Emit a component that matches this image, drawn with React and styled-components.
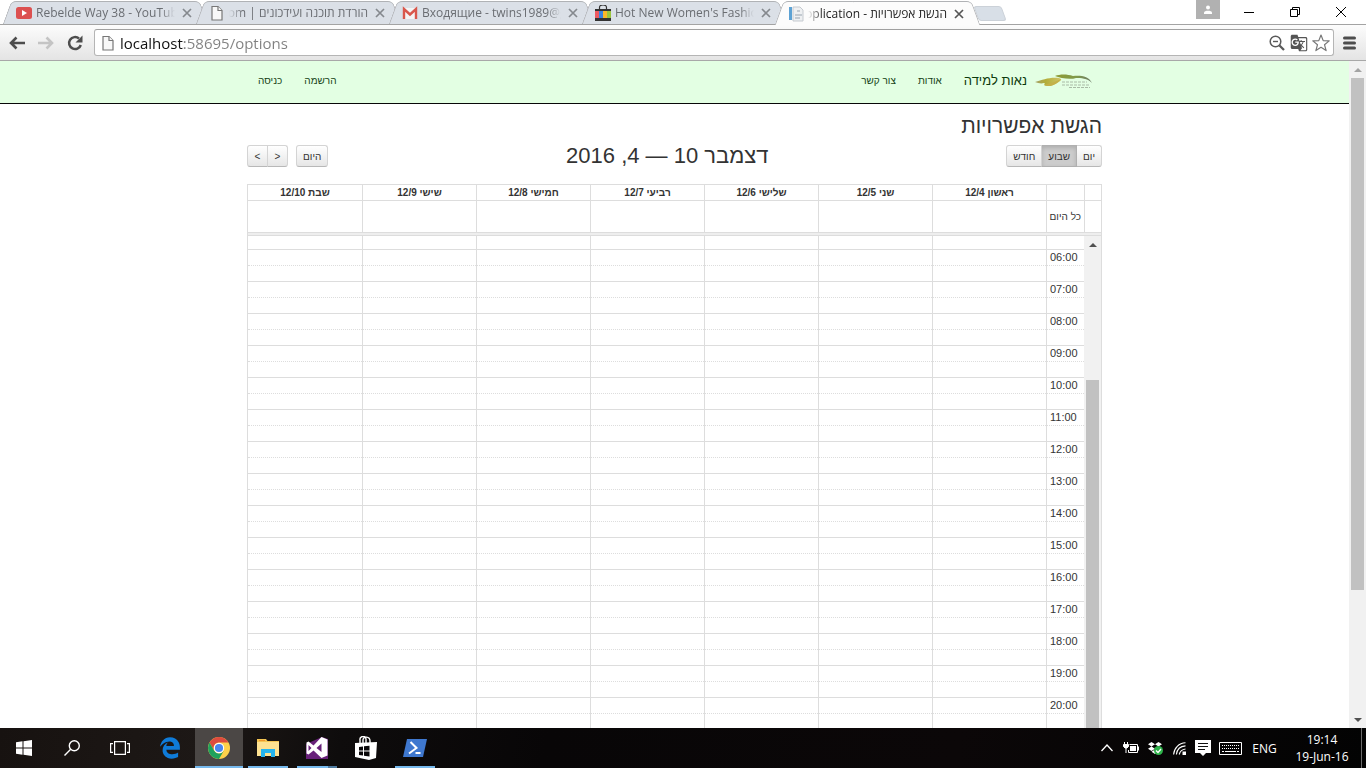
import React from "react";
import styled, { createGlobalStyle, css } from "styled-components";
import { MdGTranslate } from "react-icons/md";
import { FaEdgeLegacy, FaDropbox } from "react-icons/fa6";

const UI_FONT = '"Open Sans", "Liberation Sans", sans-serif';
const PAGE_FONT = '"Liberation Sans", Arial, sans-serif';
const LINE = "#dddddd";

const GlobalStyle = createGlobalStyle`
  *, *::before, *::after { box-sizing: border-box; }
  body { margin: 0; background: #fff; font-family: ${PAGE_FONT}; }
  button, input { font: inherit; color: inherit; margin: 0; padding: 0; border: 0; background: none; }
  button { display: flex; align-items: center; justify-content: center; }
  svg { display: block; flex: none; }
`;

const Screen = styled.div`
  display: flex;
  flex-direction: column;
  height: 100vh;
  overflow: hidden;
`;

/* ---------- browser tabs ---------- */

const TabStrip = styled.div`
  display: flex;
  flex: none;
  height: 25px;
  padding-left: 3px;
  border-bottom: 1px solid #a3a3a3;
  font-family: ${UI_FONT};
  font-size: 12px;
`;

const Tab = styled.div`
  position: relative;
  isolation: isolate;
  z-index: ${(p) => (p.$active ? 1 : 0)};
  display: flex;
  align-items: center;
  gap: 4px;
  flex: 0 1 205px;
  min-width: 0;
  height: ${(p) => (p.$active ? 25 : 24)}px;
  padding: 2px 13px 0 13px;
  color: ${(p) => (p.$active ? "#222" : "#6a6d72")};
  & + & { margin-left: -12px; }
  &::before, &::after {
    content: "";
    position: absolute;
    z-index: -1;
    top: 1px;
    bottom: 0;
    background: ${(p) => (p.$active ? "#fcfcfc" : "#dbe0e7")};
    border: 1px solid #b0b2b5;
    border-bottom: 0;
  }
  &::before {
    left: 4px;
    right: 50%;
    border-right: 0;
    border-radius: 5px 0 0 0;
    transform: skewX(-20deg);
  }
  &::after {
    left: 40%;
    right: 4px;
    border-left: 0;
    border-radius: 0 5px 0 0;
    transform: skewX(20deg);
  }
`;

const TabTitle = styled.span`
  flex: 1;
  min-width: 0;
  height: 18px;
  line-height: 18px;
  overflow: hidden;
  white-space: nowrap;
  direction: ${(p) => (p.$rtl ? "rtl" : "ltr")};
  mask-image: linear-gradient(${(p) => (p.$rtl ? "to left" : "to right")}, #000 calc(100% - 14px), transparent);
`;

const TabClose = styled.button`
  width: 16px;
  height: 16px;
`;

const NewTab = styled.button`
  width: 28px;
  height: 15px;
  margin: 6px 0 0 -4px;
  background: #d8dfe7;
  border: 1px solid #cbd1d8;
  border-radius: 3px;
  transform: skewX(20deg);
`;

const WindowControls = styled.div`
  display: flex;
  margin-left: auto;
  padding-right: 2px;
`;

const ProfileButton = styled.button`
  width: 24px;
  height: 19px;
  margin-right: 6px;
  background: #b1b1b1;
`;

const WindowButton = styled.button`
  width: 46px;
  height: 24px;
`;

/* ---------- browser toolbar ---------- */

const Toolbar = styled.div`
  display: flex;
  align-items: center;
  flex: none;
  height: 36px;
  padding: 0 8px;
  background: linear-gradient(#fcfcfc, #e4e4e4);
  border-bottom: 1px solid #a8a8a8;
`;

const NavButton = styled.button`
  width: 18px;
  height: 24px;
  margin-right: 11px;
`;

const AddressBar = styled.form`
  display: flex;
  align-items: center;
  gap: 4px;
  flex: 1;
  height: 27px;
  margin: 0 6px 0 -1px;
  padding: 0 3px 0 5px;
  background: #fff;
  border: 1px solid #b5b5b5;
  border-top-color: #a0a0a0;
  border-radius: 3px;
`;

const AddressInput = styled.input`
  flex: 1;
  min-width: 0;
  height: 24px;
  font-family: ${UI_FONT};
  font-size: 15px;
  color: transparent;
  background: linear-gradient(90deg, #111 64px, #808080 64px);
  background-clip: text;
  outline: 0;
`;

const BarButton = styled.button`
  width: 18px;
  height: 20px;
  color: #555;
`;

/* ---------- scroll bars ---------- */

const ScrollTrack = styled.div`
  display: flex;
  flex-direction: column;
  align-items: center;
  flex: none;
  width: 17px;
  background: #f1f1f1;
`;

const ScrollArrow = styled.button`
  width: 17px;
  height: 17px;
  color: ${(p) => (p.$dim ? "#a3a3a3" : "#505050")};
`;

const ScrollThumb = styled.div`
  width: 13px;
  background: #c1c1c1;
`;

const ScrollSpace = styled.div``;

/* ---------- page ---------- */

const Viewport = styled.div`
  display: flex;
  flex: 1;
  min-height: 0;
  overflow: hidden;
`;

const Page = styled.div`
  flex: 1;
  min-width: 0;
  display: flex;
  flex-direction: column;
  color: #333;
`;

const Container = styled.div`
  width: 100%;
  max-width: 855px;
  margin: 0 auto;
`;

const Navbar = styled.header`
  flex: none;
  height: 43px;
  background: #e3ffe3;
  border-bottom: 1px solid #080808;
`;

const NavInner = styled(Container)`
  display: flex;
  align-items: center;
  justify-content: space-between;
  height: 38px;
  padding: 0 9px 0 11px;
`;

const NavGroup = styled.nav`
  display: flex;
  align-items: center;
  gap: 22px;
`;

const Brand = styled.a`
  display: flex;
  align-items: center;
  gap: 8px;
  font-size: 13px;
  color: #0c3a0c;
  text-decoration: none;
`;

const NavLink = styled.a`
  font-size: 10px;
  color: #163f16;
  text-decoration: none;
`;

const Main = styled.main`
  flex: 1;
  min-height: 0;
  display: flex;
`;

const MainInner = styled(Container)`
  display: flex;
  flex-direction: column;
`;

const PageTitle = styled.h2`
  margin: 8px 0 0;
  font-size: 21px;
  line-height: 28px;
  font-weight: 400;
`;

const CalendarBar = styled.div`
  display: flex;
  align-items: center;
  justify-content: space-between;
  margin: 4px 0 16px;
  height: 24px;
`;

const CalendarTitle = styled.h2`
  margin: 0;
  font-size: 22px;
  line-height: 24px;
  font-weight: 400;
`;

const ButtonRow = styled.div`
  display: flex;
  gap: 8px;
`;

const ButtonGroup = styled.div`
  display: flex;
`;

const CalButton = styled.button`
  min-width: 21px;
  height: 22px;
  padding: 0 6px;
  direction: ${(p) => (p.$ltr ? "ltr" : "inherit")};
  font-size: 10px;
  background: linear-gradient(#ffffff, #e6e6e6);
  border: 1px solid #d4d4d4;
  border-bottom-color: #b8b8b8;
  border-radius: 0;
  & + & { margin-right: -1px; }
  &:first-child { border-radius: 0 3px 3px 0; }
  &:last-child { border-radius: 3px 0 0 3px; }
  &:only-child { border-radius: 3px; }
  ${(p) => p.$active && css`
    background: #cccccc;
    border-color: #b0b0b0;
    box-shadow: inset 0 2px 4px rgba(0, 0, 0, 0.15);
  `}
`;

const Calendar = styled.section`
  flex: 1;
  min-height: 0;
  display: flex;
  flex-direction: column;
  border: 1px solid ${LINE};
  border-bottom: 0;
`;

const Grid = styled.table`
  flex: none;
  width: 100%;
  table-layout: fixed;
  border-spacing: 0;
  font-size: ${(p) => (p.$slots ? 11 : 10)}px;
`;

const AxisCol = styled.col`
  width: 38px;
`;

const GutterCol = styled.col`
  width: 17px;
`;

const HeadCell = styled.th`
  height: 15px;
  padding: 0;
  line-height: 15px;
  border-left: 1px solid ${LINE};
  &:last-child { border-left: 0; }
`;

const AllDayCell = styled.td`
  height: 32px;
  padding: 0 3px;
  white-space: nowrap;
  border-top: 1px solid ${LINE};
  border-left: 1px solid ${LINE};
  &:last-child { border-left: 0; }
`;

const Divider = styled.div`
  flex: none;
  height: 4px;
  background: #eeeeee;
  border: 1px solid ${LINE};
  border-width: 1px 0;
`;

const Scroller = styled.div`
  flex: 1;
  min-height: 0;
  display: flex;
  flex-direction: row-reverse;
  align-items: stretch;
  overflow: hidden;
`;

const SlotArea = styled.div`
  flex: 1;
  min-width: 0;
`;

const SlotCell = styled.td`
  height: ${(p) => (p.$first ? 13 : 16)}px;
  padding: 0 3px;
  line-height: 15px;
  text-align: left;
  border-top: ${(p) => (p.$first ? "0" : "1px")} ${(p) => (p.$half ? "dotted" : "solid")} ${LINE};
  border-left: 1px solid ${LINE};
  &:last-child { border-left: 0; }
`;

/* ---------- task bar ---------- */

const Taskbar = styled.footer`
  display: flex;
  align-items: stretch;
  flex: none;
  height: 40px;
  color: #fff;
  background: linear-gradient(100deg, #171210, #1d1816 15%, #0e0c0c 25%, #080607 40%, #0b0708 70%, #030303);
  font-family: ${UI_FONT};
  font-size: 12px;
`;

const TaskButton = styled.button`
  width: 48px;
`;

const AppList = styled.div`
  display: flex;
  gap: 1px;
  margin-left: 2px;
`;

const AppButton = styled(TaskButton)`
  background-color: ${(p) => (p.$current ? "#4b4745" : "transparent")};
  background-image: ${(p) => {
    if (p.$group) return "linear-gradient(90deg, #76b9ed 31px, #4f7ba0 31px)";
    if (p.$current || p.$open) return "linear-gradient(#76b9ed, #76b9ed)";
    return "none";
  }};
  background-size: ${(p) => (p.$current ? 48 : 40)}px 2px;
  background-position: center bottom;
  background-repeat: no-repeat;
`;

const Tray = styled.div`
  display: flex;
  align-items: center;
  margin-left: auto;
`;

const TrayButton = styled.button`
  width: 24px;
  height: 40px;
`;

const KeyboardButton = styled(TrayButton)`
  width: 31px;
`;

const Language = styled(TrayButton)`
  width: 37px;
`;

const Clock = styled.button`
  flex-direction: column;
  width: 78px;
  line-height: 17px;
`;

const ShowDesktop = styled.button`
  align-self: stretch;
  width: 5px;
  border-left: 1px solid #6b6b6b;
`;

/* ---------- icons ---------- */

const CloseIcon = ({ color }) => (
  <svg width="10" height="10" viewBox="0 0 10 10" stroke={color} strokeWidth="1.7">
    <path d="M1 1l8 8M9 1l-8 8" />
  </svg>
);

const FileIcon = () => (
  <svg width="16" height="16" viewBox="0 0 16 16" fill="#f8f8f8" stroke="#777" strokeWidth="1.2">
    <path d="M3 1.5h6l4 4v9.5H3z" />
    <path d="M9 1.5v4h4" />
  </svg>
);

const YouTubeIcon = () => (
  <svg width="16" height="16" viewBox="0 0 16 16">
    <rect y="2" width="16" height="12" rx="2.5" fill="#dc5050" />
    <path d="M6 5l5 3-5 3z" fill="#fff" />
  </svg>
);

const GmailIcon = () => (
  <svg width="16" height="16" viewBox="0 0 16 16">
    <rect x="1" y="3" width="14" height="11" fill="#f4f4f4" />
    <path d="M2 14V4l6 5.5L14 4v10" fill="none" stroke="#d9574c" strokeWidth="2.4" />
  </svg>
);

const BagIcon = () => (
  <svg width="16" height="16" viewBox="0 0 16 16">
    <path d="M4.500 4V2.500a3.500 2.500 0 0 1 7 0V4" fill="none" stroke="#333" strokeWidth="1.2" />
    <path d="M0 4h16v12H0z" fill="#333" />
    <path d="M0 6h4v7H0z" fill="#ee5a60" />
    <path d="M4 6h4v7H4z" fill="#3b83e0" />
    <path d="M8 6h4v7H8z" fill="#fbb829" />
    <path d="M12 6h4v7h-4z" fill="#9bc53d" />
  </svg>
);

const AppPageIcon = () => (
  <svg width="16" height="16" viewBox="0 0 16 16">
    <path d="M1 1h3v13H1z" fill="#5da2d4" />
    <path d="M5 1h7l3 3v11H5z" fill="#eef0f2" stroke="#c5cad0" />
    <path d="M7 9h7M7 12h5M9 5h3" stroke="#b5bdc6" strokeWidth="1.500" />
  </svg>
);

const ArrowIcon = ({ color, flip }) => (
  <svg width="18" height="16" viewBox="0 0 18 16" fill="none" stroke={color} strokeWidth="2.6">
    <path d={flip ? "M1 8h14M9.500 2.500l5.500 5.500-5.500 5.500" : "M17 8H3M8.500 2.500L3 8l5.500 5.500"} />
  </svg>
);

const ReloadIcon = () => (
  <svg width="18" height="18" viewBox="0 0 18 18">
    <path d="M14.800 11A6 6 0 1 1 13 4.500" fill="none" stroke="#4d4d4d" strokeWidth="2.500" />
    <path d="M16.500 1.500v7h-7z" fill="#4d4d4d" />
  </svg>
);

const ZoomOutIcon = () => (
  <svg width="16" height="16" viewBox="0 0 16 16" fill="none" stroke="#5a5a5a">
    <circle cx="6.500" cy="6.500" r="5.300" strokeWidth="1.500" />
    <path d="M4 6.500h5" strokeWidth="1.400" />
    <path d="M10.500 10.500l4.500 4.500" strokeWidth="2.300" />
  </svg>
);

const StarIcon = () => (
  <svg width="18" height="18" viewBox="0 0 18 18" fill="#fff" stroke="#777" strokeWidth="1.200" strokeLinejoin="round">
    <path d="M9 1l2.200 5.600 6 .3-4.700 3.800 1.600 5.900L9 13.300l-5.100 3.300 1.600-5.900L.8 6.900l6-.3z" />
  </svg>
);

const MenuIcon = () => (
  <svg width="13" height="14" viewBox="0 0 13 14" stroke="#4d4d4d" strokeWidth="3" strokeLinecap="round">
    <path d="M1.500 2h10M1.500 7h10M1.500 12h10" />
  </svg>
);

const Triangle = ({ down }) => (
  <svg width="8" height="4" viewBox="0 0 8 4" fill="currentColor">
    <path d={down ? "M0 0h8L4 4z" : "M0 4h8L4 0z"} />
  </svg>
);

const LeafLogo = () => (
  <svg width="58" height="18" viewBox="0 0 58 18">
    <defs>
      <linearGradient id="leaf" x1="0" x2="1">
        <stop offset="0" stopColor="#a3a06a" />
        <stop offset="0.400" stopColor="#b3ad3a" />
        <stop offset="1" stopColor="#cfc56a" />
      </linearGradient>
      <linearGradient id="stem" x1="0" x2="1">
        <stop offset="0" stopColor="#8f9c34" />
        <stop offset="0.600" stopColor="#7f9a4c" />
        <stop offset="1" stopColor="#6e7a6a" />
      </linearGradient>
    </defs>
    <path d="M0 11C8 9 14 6 24 7C28 8 26 10 22 12C17 15 12 16 9 14C10 13 10 12 9 12C6 13 3 12 0 11z" fill="url(#leaf)" />
    <path d="M9 14C14 13 20 11 26 8C22 13 16 17 9 14z" fill="#c4b04a" />
    <path d="M20 5C25 3 32 3 38 5C45 4 54 5 57 12C52 7 46 7 41 7C35 9 25 7 20 5z" fill="url(#stem)" />
    <path d="M27 11h25M27 14h28M34 16.500h21" stroke="#a9baa6" strokeWidth="1" strokeDasharray="3 1" />
  </svg>
);

const WindowsIcon = () => (
  <svg width="16" height="16" viewBox="0 0 16 16" fill="#fff">
    <path d="M0 2.200L6.500 1.300v6.200H0zM7.500 1.200L16 0v7.500H7.500zM0 8.500h6.500v6.200L0 13.800zM7.500 8.500H16V16l-8.500-1.200z" />
  </svg>
);

const SearchIcon = () => (
  <svg width="16" height="16" viewBox="0 0 16 16" fill="none" stroke="#fff" strokeWidth="1.400">
    <circle cx="10.300" cy="5.700" r="5" />
    <path d="M6.700 9.300L.5 15.500" />
  </svg>
);

const TaskViewIcon = () => (
  <svg width="20" height="16" viewBox="0 0 20 16" fill="none" stroke="#fff" strokeWidth="1.200">
    <path d="M4.600 1.600h10.800v12.800H4.600zM3 3.600H.6v8.800H3M17 3.600h2.400v8.800H17" />
  </svg>
);

const ChromeIcon = () => (
  <svg width="22" height="22" viewBox="0 0 22 22">
    <circle cx="11" cy="11" r="11" fill="#fdd14a" />
    <path d="M1.500 5.500A11 11 0 0 1 20.500 5.500H11a5.500 5.500 0 0 0-4.800 8.200z" fill="#dd4b3e" />
    <path d="M1.500 5.500A11 11 0 0 0 11 22l4.800-8.300a5.500 5.500 0 0 1-9.600 0z" fill="#1fa15d" />
    <circle cx="11" cy="11" r="5.200" fill="#fff" />
    <circle cx="11" cy="11" r="4.100" fill="#4a86ee" />
  </svg>
);

const ExplorerIcon = () => (
  <svg width="22" height="18" viewBox="0 0 22 18">
    <path d="M0 0h9l1.500 2H22v15H0z" fill="#f4c553" />
    <path d="M0 3h22v14H0z" fill="#fde191" />
    <path d="M4 10h14v8h-4v-4H8v4H4z" fill="#25b4ee" />
    <path d="M2 1h6v1H2z" fill="#f0962a" />
  </svg>
);

const VisualStudioIcon = () => (
  <svg width="22" height="22" viewBox="0 0 22 22">
    <path d="M0 7L16 0l6 2v20H0z" fill="#68217a" />
    <path
      d="M15.500 0L21.500 2.500v16L15.500 21L7.500 13.500L2.500 17.500L0.500 16.500V5.500L2.500 4.500L7.500 8.500zM15.500 6.500L10.500 11L15.500 15zM2.500 8v6L5.500 11z"
      fill="#fff"
      fillRule="evenodd"
    />
  </svg>
);

const StoreIcon = () => (
  <svg width="22" height="24" viewBox="0 0 22 24">
    <path d="M5 7V4a3 3 0 0 1 6-1v4M8 7V4c0-4 7-4 7 1v2" fill="none" stroke="#fff" strokeWidth="1.400" />
    <path d="M0 7l22-1-1 16-7 2-14-3z" fill="#fff" />
    <path d="M4 11l4-.5v4H4zM9 10.300l5.500-.6v4.800H9zM4 15.500h4v4l-4-.5zM9 15.500h5.500v5L9 19.800z" fill="#0a0809" />
  </svg>
);

const PowerShellIcon = () => (
  <svg width="24" height="18" viewBox="0 0 24 18">
    <path d="M4 0h20l-4 18H0z" fill="#3f78cf" />
    <path d="M7.500 3l6 6-7.500 5.500M12.500 14h5" fill="none" stroke="#fff" strokeWidth="2" />
  </svg>
);

const ChevronIcon = () => (
  <svg width="12" height="8" viewBox="0 0 12 8" fill="none" stroke="#fff" strokeWidth="1.300">
    <path d="M.5 7L6 1l5.500 6" />
  </svg>
);

const BatteryIcon = () => (
  <svg width="16" height="12" viewBox="0 0 16 12" fill="none" stroke="#fff">
    <path d="M6.500 2.500h8v8h-9V8M15.500 4.500v4" />
    <path d="M7 4h6v5H7z" fill="#fff" stroke="none" />
    <path d="M1.500 0v2.500M4.500 0v2.500M3 6v5" />
    <path d="M.5 2.500h5v2L4 6H2L.5 4.500z" fill="#fff" />
  </svg>
);

const SyncBadge = () => (
  <svg width="9" height="9" viewBox="0 0 9 9">
    <circle cx="4.500" cy="4.500" r="4.500" fill="#2eb34a" />
    <path d="M2 4.500l2 2 3-3.500" fill="none" stroke="#fff" strokeWidth="1.300" />
  </svg>
);

const DropboxButton = styled(TrayButton)`
  position: relative;
  svg + svg { position: absolute; right: 4px; bottom: 13px; }
`;

const WifiIcon = () => (
  <svg width="13" height="13" viewBox="0 0 13 13" fill="none" stroke="#fff" strokeWidth="1.100">
    <path d="M.6 12.500C1 6 6 1 12.500.8M3.400 12.500C4 7.500 7.500 4.200 12.500 3.900M6.200 12.500C7 9.500 9 7.500 12.500 7" />
    <path d="M9.500 9.500h3.500V13H9.500z" fill="#fff" stroke="none" />
  </svg>
);

const NotificationIcon = () => (
  <svg width="16" height="16" viewBox="0 0 16 16">
    <path d="M0 0h16v13h-5l-3 3-3-3H0z" fill="#fff" />
    <path d="M3 3.500h10M3 6.500h10M3 9.500h7" stroke="#111" strokeWidth="1.200" />
  </svg>
);

const KeyboardIcon = () => (
  <svg width="23" height="13" viewBox="0 0 23 13" fill="none" stroke="#fff">
    <path d="M.5.5h22v12H.5z" />
    <path d="M3 3.500h18M3 6.500h18" strokeDasharray="1 1" />
    <path d="M3 9.500h2M6 9.500h11M18 9.500h2" />
  </svg>
);

/* ---------- data ---------- */

const TABS = [
  { icon: <YouTubeIcon />, title: "Rebelde Way 38 - YouTube" },
  { icon: <FileIcon />, title: "הורדת תוכנה ועידכונים | com", rtl: true },
  { icon: <GmailIcon />, title: "Входящие - twins1989@gmail" },
  { icon: <BagIcon />, title: "Hot New Women's Fashion" },
  { icon: <AppPageIcon />, title: "הגשת אפשרויות - Application", rtl: true, active: true },
];

const DAYS = ["ראשון 12/4", "שני 12/5", "שלישי 12/6", "רביעי 12/7", "חמישי 12/8", "שישי 12/9", "שבת 12/10"];

const SLOTS = [{ first: true }];
for (let hour = 6; hour <= 20; hour += 1) {
  SLOTS.push({ label: `${String(hour).padStart(2, "0")}:00` });
  SLOTS.push({ half: true });
}

const APPS = [
  { name: "Edge", icon: <FaEdgeLegacy size={22} color="#0f7bd8" /> },
  { name: "Chrome", icon: <ChromeIcon />, current: true },
  { name: "File Explorer", icon: <ExplorerIcon />, open: true },
  { name: "Visual Studio", icon: <VisualStudioIcon />, group: true },
  { name: "Store", icon: <StoreIcon /> },
  { name: "PowerShell", icon: <PowerShellIcon />, open: true },
];

const DayCols = () => DAYS.map((day) => <col key={day} />);

function BrowserChrome() {
  return (
    <>
      <TabStrip>
        {TABS.map((tab) => (
          <Tab key={tab.title} $active={tab.active}>
            {tab.icon}
            <TabTitle $rtl={tab.rtl}>{tab.title}</TabTitle>
            <TabClose aria-label="Close tab">
              <CloseIcon color={tab.active ? "#555" : "#85898e"} />
            </TabClose>
          </Tab>
        ))}
        <NewTab aria-label="New tab" />
        <WindowControls>
          <ProfileButton aria-label="Profile">
            <svg width="10" height="10" viewBox="0 0 10 10" fill="#fff">
              <circle cx="5" cy="2.500" r="2" />
              <path d="M1 9V7.500C1 5 9 5 9 7.500V9z" />
            </svg>
          </ProfileButton>
          <WindowButton aria-label="Minimize">
            <svg width="10" height="10" viewBox="0 0 10 10" stroke="#000"><path d="M0 5.500h10" /></svg>
          </WindowButton>
          <WindowButton aria-label="Restore">
            <svg width="10" height="10" viewBox="0 0 10 10" fill="none" stroke="#000">
              <path d="M.5 2.500h7v7h-7zM2.500 2.500v-2h7v7h-2" />
            </svg>
          </WindowButton>
          <WindowButton aria-label="Close">
            <svg width="10" height="10" viewBox="0 0 10 10" stroke="#000"><path d="M0 0l10 10M10 0L0 10" /></svg>
          </WindowButton>
        </WindowControls>
      </TabStrip>
      <Toolbar>
        <NavButton aria-label="Back"><ArrowIcon color="#4d4d4d" /></NavButton>
        <NavButton aria-label="Forward"><ArrowIcon color="#c4c4c4" flip /></NavButton>
        <NavButton aria-label="Reload"><ReloadIcon /></NavButton>
        <AddressBar>
          <FileIcon />
          <AddressInput aria-label="Address" defaultValue="localhost:58695/options" spellCheck={false} />
          <BarButton type="button" aria-label="Zoom"><ZoomOutIcon /></BarButton>
          <BarButton type="button" aria-label="Translate"><MdGTranslate size={18} /></BarButton>
          <BarButton type="button" aria-label="Bookmark"><StarIcon /></BarButton>
        </AddressBar>
        <BarButton aria-label="Menu"><MenuIcon /></BarButton>
      </Toolbar>
    </>
  );
}

function WeekCalendar() {
  return (
    <Calendar>
      <Grid>
        <colgroup><GutterCol /><AxisCol /><DayCols /></colgroup>
        <thead>
          <tr>
            <HeadCell />
            <HeadCell />
            {DAYS.map((day) => <HeadCell key={day} scope="col">{day}</HeadCell>)}
          </tr>
        </thead>
        <tbody>
          <tr>
            <AllDayCell />
            <AllDayCell>כל היום</AllDayCell>
            {DAYS.map((day) => <AllDayCell key={day} />)}
          </tr>
        </tbody>
      </Grid>
      <Divider />
      <Scroller>
        <SlotArea>
          <Grid $slots>
            <colgroup><AxisCol /><DayCols /></colgroup>
            <tbody>
              {SLOTS.map((slot, i) => (
                <tr key={i}>
                  <SlotCell $first={slot.first} $half={slot.half}>{slot.label}</SlotCell>
                  {DAYS.map((day) => <SlotCell key={day} $first={slot.first} $half={slot.half} />)}
                </tr>
              ))}
            </tbody>
          </Grid>
        </SlotArea>
        <ScrollTrack>
          <ScrollArrow aria-label="Scroll up"><Triangle /></ScrollArrow>
          <ScrollSpace style={{ flex: "127 1 0" }} />
          <ScrollThumb style={{ flex: "348 1 0" }} />
        </ScrollTrack>
      </Scroller>
    </Calendar>
  );
}

export default function App() {
  return (
    <Screen>
      <GlobalStyle />
      <BrowserChrome />
      <Viewport>
        <Page dir="rtl" lang="he">
          <Navbar>
            <NavInner>
              <NavGroup>
                <Brand href="#home"><LeafLogo />נאות למידה</Brand>
                <NavLink href="#about">אודות</NavLink>
                <NavLink href="#contact">צור קשר</NavLink>
              </NavGroup>
              <NavGroup>
                <NavLink href="#register">הרשמה</NavLink>
                <NavLink href="#login">כניסה</NavLink>
              </NavGroup>
            </NavInner>
          </Navbar>
          <Main>
            <MainInner>
              <PageTitle>הגשת אפשרויות</PageTitle>
              <CalendarBar>
                <ButtonGroup>
                  <CalButton>יום</CalButton>
                  <CalButton $active>שבוע</CalButton>
                  <CalButton>חודש</CalButton>
                </ButtonGroup>
                <CalendarTitle>דצמבר 10 — 4, 2016</CalendarTitle>
                <ButtonRow>
                  <ButtonGroup><CalButton>היום</CalButton></ButtonGroup>
                  <ButtonGroup>
                    <CalButton $ltr>&gt;</CalButton>
                    <CalButton $ltr>&lt;</CalButton>
                  </ButtonGroup>
                </ButtonRow>
              </CalendarBar>
              <WeekCalendar />
            </MainInner>
          </Main>
        </Page>
        <ScrollTrack>
          <ScrollArrow $dim aria-label="Scroll up"><Triangle /></ScrollArrow>
          <ScrollThumb style={{ flex: "512 1 0" }} />
          <ScrollSpace style={{ flex: "121 1 0" }} />
          <ScrollArrow aria-label="Scroll down"><Triangle down /></ScrollArrow>
        </ScrollTrack>
      </Viewport>
      <Taskbar>
        <TaskButton aria-label="Start"><WindowsIcon /></TaskButton>
        <TaskButton aria-label="Search"><SearchIcon /></TaskButton>
        <TaskButton aria-label="Task view"><TaskViewIcon /></TaskButton>
        <AppList>
          {APPS.map((app) => (
            <AppButton key={app.name} aria-label={app.name} $current={app.current} $open={app.open} $group={app.group}>
              {app.icon}
            </AppButton>
          ))}
        </AppList>
        <Tray>
          <TrayButton aria-label="Hidden icons"><ChevronIcon /></TrayButton>
          <TrayButton aria-label="Battery"><BatteryIcon /></TrayButton>
          <DropboxButton aria-label="Dropbox"><FaDropbox size={14} /><SyncBadge /></DropboxButton>
          <TrayButton aria-label="Network"><WifiIcon /></TrayButton>
          <TrayButton aria-label="Notifications"><NotificationIcon /></TrayButton>
          <KeyboardButton aria-label="Keyboard"><KeyboardIcon /></KeyboardButton>
          <Language>ENG</Language>
          <Clock><span>19:14</span><span>19-Jun-16</span></Clock>
          <ShowDesktop aria-label="Show desktop" />
        </Tray>
      </Taskbar>
    </Screen>
  );
}
